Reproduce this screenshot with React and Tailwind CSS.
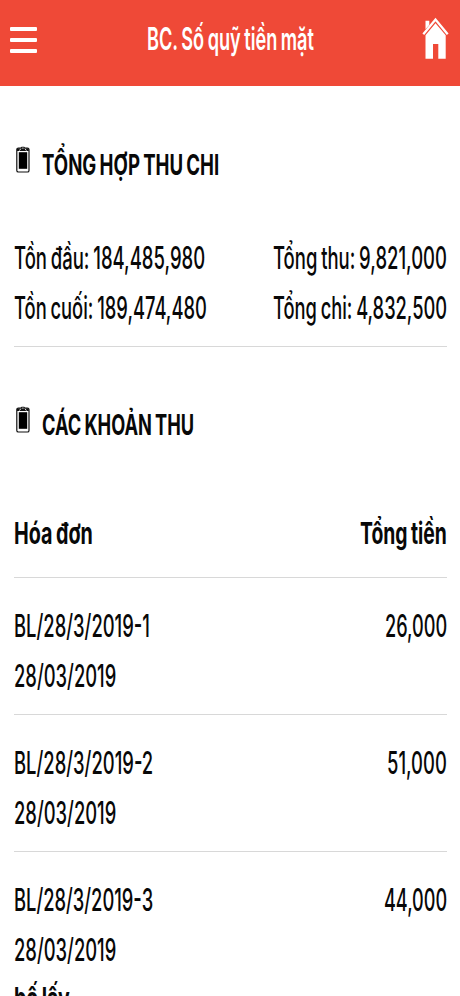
import { useLayoutEffect, useRef } from "react";

// Condenses a line of text horizontally so that it fills its box.
function Condensed({ children, className = "" }) {
  const box = useRef(null);
  const text = useRef(null);
  useLayoutEffect(() => {
    const ratio = box.current.clientWidth / text.current.offsetWidth;
    text.current.style.transform = `scaleX(${ratio})`;
  }, [children]);
  return (
    <div ref={box} className={`shrink-0 whitespace-nowrap ${className}`}>
      <span ref={text} className="inline-block origin-left align-top">{children}</span>
    </div>
  );
}

function Clipboard() {
  return (
    <svg className="mt-[6px] h-[27px] w-[14px] shrink-0" viewBox="0 0 14 27" fill="none">
      <rect x="0.8" y="2" width="12.2" height="24" rx="1.6" stroke="#111" strokeWidth="1.2" />
      <rect x="2.8" y="6.2" width="8.4" height="16.6" fill="#000" />
      <path d="M1 5V2.2H4.4L5.6.7H8.2L9.4 2.2H12.8V5Z" fill="#111" />
      <path d="M3.4 4.6 4.9 2.6M10.4 4.6 8.9 2.6M6.2 2.1H7.6" stroke="#fff" strokeWidth=".9" />
    </svg>
  );
}

function Section({ title, width }) {
  return (
    <h2 className="flex h-[50px] gap-[12px] pl-[2px] text-[29px] leading-[50px] font-bold">
      <Clipboard />
      <Condensed className={width}>{title}</Condensed>
    </h2>
  );
}

const invoices = [
  { id: "BL/28/3/2019-1", total: "26,000", idWidth: "w-[136px]", totalWidth: "w-[62px]" },
  { id: "BL/28/3/2019-2", total: "51,000", idWidth: "w-[139px]", totalWidth: "w-[60px]" },
  { id: "BL/28/3/2019-3", total: "44,000", idWidth: "w-[139px]", totalWidth: "w-[63px]", note: "bố lấy" },
];

export default function App() {
  return (
    <div className="h-[996px] w-[460px] overflow-hidden bg-white font-['Inter','Liberation_Sans',sans-serif] text-[31px] leading-[50px] font-[450] [word-spacing:-0.06em] text-[#080808]">
      <header className="flex h-[86px] items-start justify-between bg-[#ef4937] text-white">
        <button className="mt-[27px] ml-[10px] flex w-[27px] flex-col gap-[7px]" aria-label="Menu">
          <span className="h-[4px] w-full rounded-[1px] bg-white" />
          <span className="h-[4px] w-full rounded-[1px] bg-white" />
          <span className="h-[4px] w-full rounded-[1px] bg-white" />
        </button>
        <h1 className="mt-[14px] ml-[2px] font-semibold">
          <Condensed className="w-[167px]">BC. Số quỹ tiền mặt</Condensed>
        </h1>
        <svg className="mt-[17px] mr-[11px] h-[43px] w-[27px]" viewBox="0 0 27 43" fill="none">
          <path d="M3.5 3.8H7.3V8L3.5 12.3Z" fill="#fff" />
          <path d="M1.3 17.2 13.5 2.6 25.7 17.2" stroke="#fff" strokeWidth="2.3" />
          <path d="M13.5 6.2 23.7 18.2V41.7H16.3V27H11V41.7H3.5V18.2Z" fill="#fff" />
        </svg>
      </header>

      <main className="pr-[13px] pl-[14px]">
        <div className="pt-[54px]">
          <Section title="TỔNG HỢP THU CHI" width="w-[177px]" />
        </div>
        <div className="mt-[43px] border-b border-[#d8d8d8] pb-[13px]">
          <div className="flex justify-between">
            <Condensed className="w-[191px]">Tồn đầu: 184,485,980</Condensed>
            <Condensed className="w-[174px]">Tổng thu: 9,821,000</Condensed>
          </div>
          <div className="flex justify-between">
            <Condensed className="w-[193px]">Tồn cuối: 189,474,480</Condensed>
            <Condensed className="w-[174px]">Tổng chi: 4,832,500</Condensed>
          </div>
        </div>

        <div className="pt-[53px]">
          <Section title="CÁC KHOẢN THU" width="w-[152px]" />
        </div>
        <div className="mt-[58px] flex justify-between border-b border-[#d8d8d8] pb-[19px] text-[30px] font-bold">
          <Condensed className="w-[79px]">Hóa đơn</Condensed>
          <Condensed className="w-[87px]">Tổng tiền</Condensed>
        </div>
        {invoices.map((item) => (
          <div key={item.id} className="border-b border-[#d8d8d8] pt-[23px] pb-[13px]">
            <div className="flex justify-between">
              <Condensed className={item.idWidth}>{item.id}</Condensed>
              <Condensed className={item.totalWidth}>{item.total}</Condensed>
            </div>
            <Condensed className="w-[102px]">28/03/2019</Condensed>
            {item.note && (
              <div className="-mt-[2px] text-[30px] font-bold">
                <Condensed className="w-[56px]">{item.note}</Condensed>
              </div>
            )}
          </div>
        ))}
      </main>
    </div>
  );
}
